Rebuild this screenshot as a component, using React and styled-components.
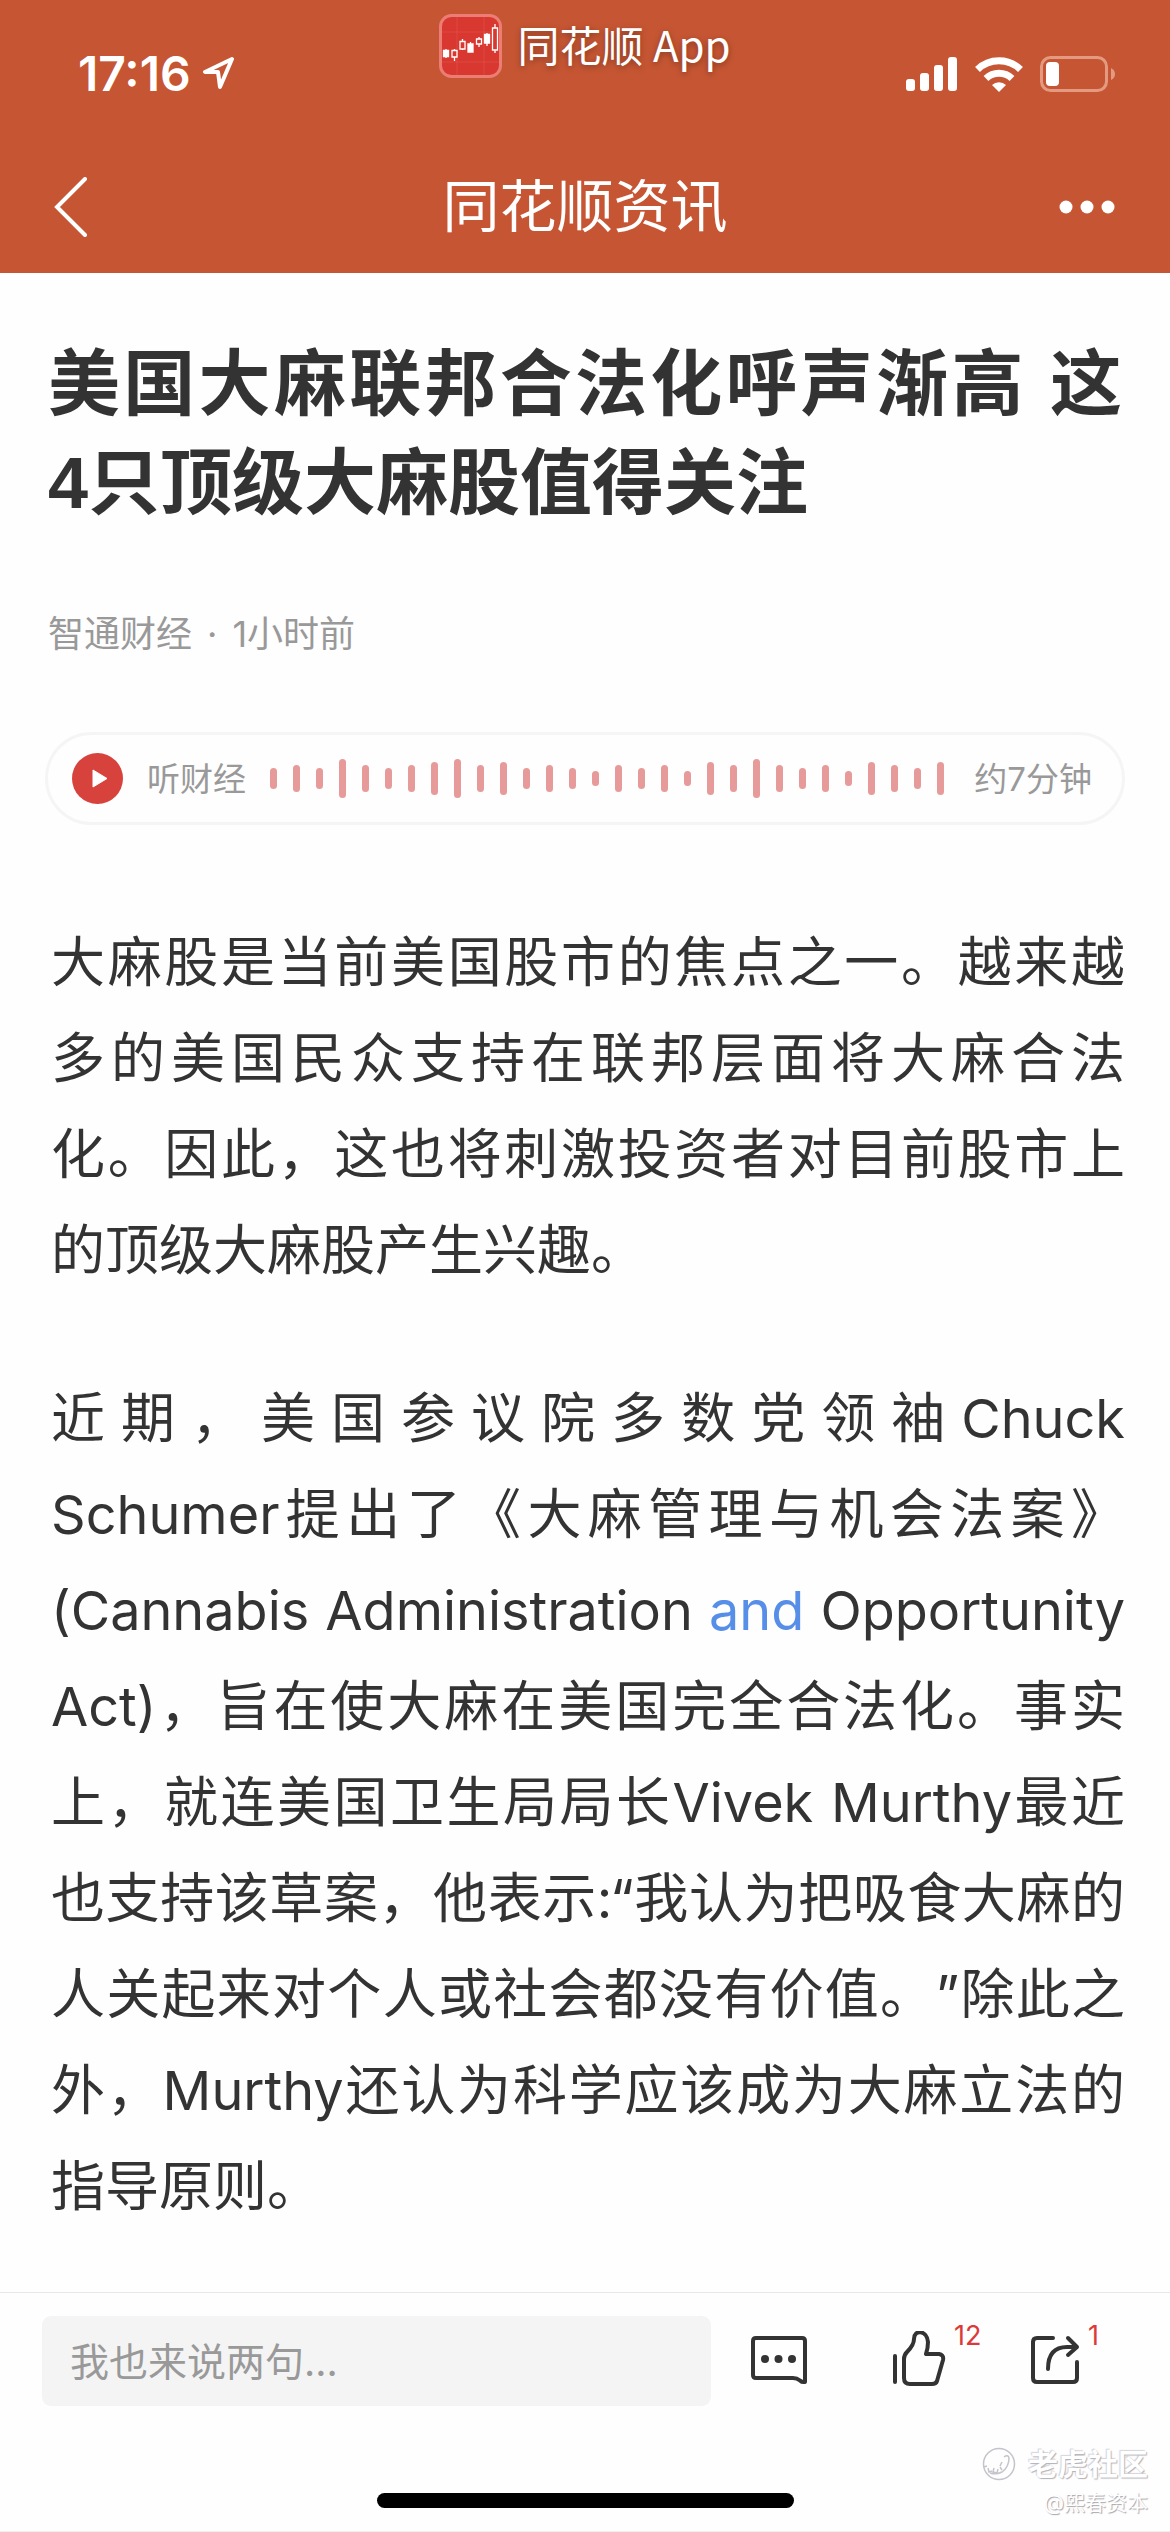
import React from 'react';
import styled, { createGlobalStyle } from 'styled-components';

const GlobalStyle = createGlobalStyle`
  * {
    box-sizing: border-box;
  }

  body {
    margin: 0;
    background: #fefefe;
    color: #333;
    font-family: Inter, 'Noto Sans CJK SC', sans-serif;
    text-autospace: no-autospace;
    text-spacing-trim: space-all;
  }

  button {
    border: 0;
    padding: 0;
    background: none;
    color: inherit;
    font: inherit;
    cursor: pointer;
  }

  svg {
    display: block;
  }
`;

const Page = styled.div`
  display: flex;
  flex-direction: column;
  min-height: 100vh;
`;

const Header = styled.header`
  background: #c65633;
  color: #fff;
`;

const StatusBar = styled.div`
  display: grid;
  grid-template-columns: 1fr auto 1fr;
  align-items: center;
  height: 141px;
  padding: 6px 54px 0;
`;

const Clock = styled.div`
  display: flex;
  align-items: center;
  gap: 12px;
  padding-left: 24px;
  font-size: 48px;
  font-weight: 600;
  line-height: 54px;
`;

const AppBadge = styled.div`
  display: flex;
  align-items: center;
  align-self: start;
  gap: 15px;
  height: 80px;
`;

const AppName = styled.span`
  padding-bottom: 4px;
  font-family: 'Noto Sans CJK SC', sans-serif;
  font-size: 42px;
  line-height: 60px;
  text-shadow: 0 2px 6px rgba(0, 0, 0, 0.35);
`;

const StatusIcons = styled.div`
  display: flex;
  align-items: center;
  justify-content: flex-end;
  gap: 17px;
`;

const NavBar = styled.nav`
  display: grid;
  grid-template-columns: 1fr auto 1fr;
  align-items: center;
  height: 132px;
  padding: 0 54px;
`;

const NavTitle = styled.div`
  font-size: 57px;
  line-height: 84px;
`;

const NavButton = styled.button`
  justify-self: ${({ $end }) => ($end ? 'end' : 'start')};
`;

const Article = styled.article`
  flex: 1;
  padding: 62px 45px 48px;
`;

const Title = styled.h1`
  margin: 0;
  padding: 0 3px;
  font-family: 'Liberation Sans', 'Noto Sans CJK SC', sans-serif;
  font-size: 72px;
  font-weight: 700;
  line-height: 99px;
  text-align: justify;
`;

const NoBreak = styled.span`
  white-space: nowrap;
`;

const Meta = styled.div`
  display: flex;
  gap: 15px;
  margin-top: 76px;
  padding: 0 3px;
  color: #999;
  font-size: 36px;
  line-height: 51px;
`;

const AudioBar = styled.section`
  display: flex;
  align-items: center;
  height: 93px;
  margin-top: 72px;
  padding: 0 30px 0 24px;
  border: 3px solid #f5f5f5;
  border-radius: 48px;
  color: #999;
  font-size: 33px;
  line-height: 48px;
`;

const AudioLabel = styled.span`
  margin: 0 24px;
`;

const Wave = styled.div`
  display: flex;
  flex: 1;
  align-items: center;
  justify-content: space-between;
  margin-right: 30px;
`;

const WaveBar = styled.span`
  width: 7px;
  height: ${({ $height }) => $height}px;
  border-radius: 4px;
  background: #e79a9a;
`;

const Body = styled.div`
  padding: 90px 0 0 6px;
`;

const Paragraph = styled.p`
  margin: 0 0 72px;
  font-size: 54px;
  line-height: 96px;
  text-align: justify;

  &:last-child {
    margin-bottom: 0;
  }
`;

const Keyword = styled.a`
  color: #568ee8;
  text-decoration: none;
`;

const Footer = styled.footer`
  border-top: 1px solid #e8e8e8;
  border-bottom: 1px solid #eee;
`;

const Toolbar = styled.div`
  display: flex;
  align-items: center;
  padding: 23px 42px 0;
`;

const CommentInput = styled.input`
  flex: 1;
  min-width: 0;
  height: 90px;
  padding: 0 28px;
  border: 0;
  border-radius: 9px;
  background: #f4f4f4;
  color: #333;
  font-family: inherit;
  font-size: 39px;

  &::placeholder {
    color: #999;
    opacity: 1;
  }
`;

const Actions = styled.div`
  display: flex;
  align-items: center;
  justify-content: space-between;
  width: 330px;
  margin-left: 39px;
  margin-right: 48px;
`;

const Action = styled.button`
  position: relative;
`;

const Count = styled.span`
  position: absolute;
  top: -10px;
  left: 100%;
  margin-left: 8px;
  color: #dc3a3a;
  font-size: 27px;
  line-height: 30px;
`;

const HomeArea = styled.div`
  display: grid;
  grid-template-columns: 1fr 417px 1fr;
  align-items: end;
  height: 125px;
  padding: 0 22px 10px;
`;

const HomeIndicator = styled.div`
  grid-column: 2;
  height: 15px;
  margin-bottom: 13px;
  border-radius: 8px;
  background: #000;
`;

const Watermark = styled.div`
  display: flex;
  flex-direction: column;
  align-items: flex-end;
  color: #fff;
`;

const WatermarkBrand = styled.div`
  display: flex;
  align-items: center;
  gap: 12px;
  font-size: 30px;
  font-weight: 700;
  line-height: 42px;
  text-shadow: 1px 1px 1px #b0b0b8, -1px -1px 1px #d4d4da;
`;

const WatermarkUser = styled.div`
  font-size: 21px;
  line-height: 36px;
  text-shadow: 1px 1px 1px #a4a4ac;
`;

const WAVE = [
  21, 27, 21, 39, 27, 21, 27, 33, 39, 27, 33, 21, 27, 21, 15,
  27, 21, 27, 15, 33, 27, 39, 27, 21, 27, 15, 33, 27, 21, 33,
];

const LocationIcon = () => (
  <svg width='32' height='34' viewBox='0 0 32 34' fill='none' stroke='#fff' strokeWidth='4' strokeLinejoin='round'>
    <path d='M29 2 L2 15 H15 L17 30 Z' />
  </svg>
);

const AppLogo = () => (
  <svg width='63' height='64' viewBox='0 0 63 64'>
    <rect x='1.500' y='1.500' width='60' height='61' rx='11' fill='#d8382f' stroke='#ec7d75' strokeWidth='3' />
    <path d='M3 18 H60 M3 48 H60 M18 3 V61 M45 3 V61' stroke='#e25a50' strokeWidth='0.500' />
    <g stroke='#fff' strokeWidth='1.300'>
      <path d='M7 35 V44 M15.500 35 V47 M23.500 25 V36 M31.500 28 V38 M40 23 V33 M48 19 V32 M56 10 V39' />
      <path d='M4.500 36.500 H9.500 V42.500 H4.500 Z M29 30 H34 V38 H29 Z M45.500 20.500 H50.500 V29 H45.500 Z' fill='#fff' />
      <path d='M13 36.500 H18 V43 H13 Z M21 27.500 H26 V35 H21 Z M37.500 25 H42.500 V30 H37.500 Z M53.500 14 H58.500 V36 H53.500 Z' fill='#d8382f' />
    </g>
  </svg>
);

const SignalIcon = () => (
  <svg width='52' height='36' viewBox='0 0 52 36' fill='#fff'>
    <rect x='0' y='23' width='9' height='12' rx='3' />
    <rect x='14' y='17' width='9' height='18' rx='3' />
    <rect x='28' y='9' width='9' height='26' rx='3' />
    <rect x='42' y='1' width='9' height='34' rx='3' />
  </svg>
);

const WifiIcon = () => (
  <svg width='48' height='36' viewBox='0 0 48 36'>
    <g fill='none' stroke='#fff' strokeWidth='7'>
      <path d='M2.500 13.500 A31 31 0 0 1 45.500 13.500' />
      <path d='M11 22.500 A19 19 0 0 1 37 22.500' />
    </g>
    <path d='M24 36 L17 29 A10 10 0 0 1 31 29 Z' fill='#fff' />
  </svg>
);

const BatteryIcon = () => (
  <svg width='76' height='36' viewBox='0 0 76 36'>
    <rect x='1.500' y='1.500' width='65' height='33' rx='9' fill='none' stroke='#e39a80' strokeWidth='3' />
    <path d='M71 12 Q75 14 75 18 Q75 22 71 24 Z' fill='#e39a80' />
    <rect x='6' y='6' width='13' height='24' rx='4' fill='#fff' />
  </svg>
);

const BackIcon = () => (
  <svg width='34' height='60' viewBox='0 0 34 60' fill='none' stroke='#fff' strokeWidth='4' strokeLinecap='round'>
    <path d='M31 2 L3 30 L31 58' />
  </svg>
);

const MoreIcon = () => (
  <svg width='57' height='14' viewBox='0 0 57 14' fill='#fff'>
    <circle cx='7' cy='7' r='6.500' />
    <circle cx='28' cy='7' r='6.500' />
    <circle cx='49' cy='7' r='6.500' />
  </svg>
);

const PlayIcon = () => (
  <svg width='51' height='51' viewBox='0 0 51 51'>
    <circle cx='25.500' cy='25.500' r='25.500' fill='#d7433c' />
    <path d='M21 17 L35 25.500 L21 34 Z' fill='#fff' stroke='#fff' strokeLinejoin='round' />
  </svg>
);

const CommentIcon = () => (
  <svg width='58' height='60' viewBox='0 0 58 60' fill='none' stroke='#333' strokeWidth='4' strokeLinejoin='round'>
    <path d='M6 7 H52 Q55 7 55 10 V51 Q52 51.500 50 49.500 Q47 47 43 47 H6 Q3 47 3 44 V10 Q3 7 6 7 Z' />
    <g fill='#333' stroke='none'>
      <circle cx='15' cy='28' r='4' />
      <circle cx='28.500' cy='28' r='4' />
      <circle cx='42' cy='28' r='4' />
    </g>
  </svg>
);

const LikeIcon = () => (
  <svg width='54' height='60' viewBox='0 0 54 60' fill='none' stroke='#333' strokeWidth='4' strokeLinecap='round' strokeLinejoin='round'>
    <path d='M3 25 V51' />
    <path d='M12 28 Q12 24 15 21 Q22 14 22 8 C22 -2 35 -1 36 11 C36 16 35 20 34 23 H47 Q52 24 51 29 L45 50 Q44 53 40 53 H18 Q12 53 12 47 Z' />
  </svg>
);

const ShareIcon = () => (
  <svg width='50' height='60' viewBox='0 0 50 60' fill='none' stroke='#333' strokeWidth='4' strokeLinecap='round' strokeLinejoin='round'>
    <path d='M23 7 H7 Q3 7 3 11 V47 Q3 51 7 51 H43 Q47 51 47 47 V31' />
    <path d='M18 38 C18 23 25 16 37 16 H46 M38 7 L47 16 L38 24' />
  </svg>
);

const TigerLogo = () => (
  <svg width='34' height='34' viewBox='0 0 34 34' fill='none' stroke='#c4c4cb' strokeWidth='1.500'>
    <circle cx='17' cy='17' r='15.500' />
    <path d='M2 20 L5 19 M6 21 L7 25 L10 24 M12 21 L11 25 L15 26 L16 22 M18 20 L20 23 M20 15 L18 19 M22 10 Q26 7 27 11 Q27 20 20 25 Q14 28 8 26' />
  </svg>
);

export default function App() {
  return (
    <Page lang='zh-CN'>
      <GlobalStyle />
      <Header>
        <StatusBar>
          <Clock>
            17:16
            <LocationIcon />
          </Clock>
          <AppBadge>
            <AppLogo />
            <AppName>同花顺 App</AppName>
          </AppBadge>
          <StatusIcons>
            <SignalIcon />
            <WifiIcon />
            <BatteryIcon />
          </StatusIcons>
        </StatusBar>
        <NavBar>
          <NavButton aria-label='返回'>
            <BackIcon />
          </NavButton>
          <NavTitle>同花顺资讯</NavTitle>
          <NavButton $end aria-label='更多'>
            <MoreIcon />
          </NavButton>
        </NavBar>
      </Header>

      <Article>
        <Title>
          美国大麻联邦合法化呼声渐高 这<NoBreak>4只</NoBreak>顶级大麻股值得关注
        </Title>
        <Meta>
          <span>智通财经</span>
          <span>·</span>
          <span>1小时前</span>
        </Meta>

        <AudioBar>
          <button aria-label='播放'>
            <PlayIcon />
          </button>
          <AudioLabel>听财经</AudioLabel>
          <Wave>
            {WAVE.map((height, index) => (
              <WaveBar key={index} $height={height} />
            ))}
          </Wave>
          <span>约7分钟</span>
        </AudioBar>

        <Body>
          <Paragraph>
            大麻股是当前美国股市的焦点之一。越来越多的美国民众支持在联邦层面将大麻合法化。因此，这也将刺激投资者对目前股市上的顶级大麻股产生兴趣。
          </Paragraph>
          <Paragraph>
            近期，美国参议院多数党领袖Chuck Schumer提出了《大麻管理与机会法案》(Cannabis
            Administration <Keyword href='#and'>and</Keyword> Opportunity
            Act)，旨在使大麻在美国完全合法化。事实上，就连美国卫生局局长Vivek
            Murthy最近也支持该草案，他表示:“我认为把吸食大麻的人关起来对个人或社会都没有价值。”除此之外，Murthy还认为科学应该成为大麻立法的指导原则。
          </Paragraph>
        </Body>
      </Article>

      <Footer>
        <Toolbar>
          <CommentInput type='text' aria-label='评论' placeholder='我也来说两句...' />
          <Actions>
            <Action aria-label='查看评论'>
              <CommentIcon />
            </Action>
            <Action aria-label='点赞'>
              <LikeIcon />
              <Count>12</Count>
            </Action>
            <Action aria-label='分享'>
              <ShareIcon />
              <Count>1</Count>
            </Action>
          </Actions>
        </Toolbar>
        <HomeArea>
          <HomeIndicator />
          <Watermark>
            <WatermarkBrand>
              <TigerLogo />
              老虎社区
            </WatermarkBrand>
            <WatermarkUser>@熙春资本</WatermarkUser>
          </Watermark>
        </HomeArea>
      </Footer>
    </Page>
  );
}
